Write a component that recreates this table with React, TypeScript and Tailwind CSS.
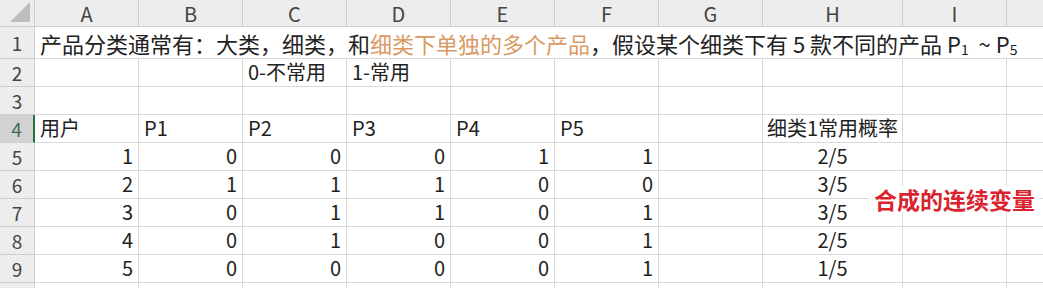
const cols = ['A', 'B', 'C', 'D', 'E', 'F', 'G', 'H', 'I', '']

const rows = [
  [1, 0, 0, 0, 1, 1, '2/5'],
  [2, 1, 1, 1, 0, 0, '3/5'],
  [3, 0, 1, 1, 0, 1, '3/5'],
  [4, 0, 1, 0, 0, 1, '2/5'],
  [5, 0, 0, 0, 0, 1, '1/5'],
]

const font = { fontFamily: '"Noto Sans CJK SC", "Liberation Sans", sans-serif' }

const Head = ({ children, active }: { children?: React.ReactNode; active?: boolean }) => (
  <div
    className={
      'flex items-center justify-center border-b border-r border-[#cfcfcf] text-[19px] leading-none ' +
      (active ? 'bg-[#d2d2d2] text-[#3f6b53] border-r-2 border-r-[#217346]' : 'bg-[#ededed] text-[#444]')
    }
  >
    {children}
  </div>
)

const Cell = ({ children, align = 'left' }: { children?: React.ReactNode; align?: string }) => (
  <div
    className={
      'flex items-end pb-[2px] px-[5px] border-b border-r border-[#d9d9d9] text-[20px] leading-[24px] text-[#222] whitespace-nowrap ' +
      (align === 'right' ? 'justify-end' : align === 'center' ? 'justify-center' : 'justify-start')
    }
  >
    {children}
  </div>
)

export default function App() {
  return (
    <div className="relative w-[1043px] h-[288px] overflow-hidden bg-white" style={font}>
      <div className="grid grid-cols-[35px_104px_104px_104px_104px_104px_104px_104px_140px_104px_40px] grid-rows-[27px_32px_28px_28px_28px_28px_28px_28px_28px_28px_28px]">
        {/* header row */}
        <div className="relative bg-[#ededed] border-b border-r border-[#cfcfcf]">
          <div className="absolute right-[4px] bottom-[4px] w-0 h-0 border-l-[20px] border-l-transparent border-b-[20px] border-b-[#bdbdbd]" />
        </div>
        {cols.map((c, i) => (
          <div
            key={i}
            className="flex items-center justify-center pt-[2px] bg-[#ededed] border-b border-r border-[#cfcfcf] text-[20px] leading-none text-[#444]"
          >
            {c}
          </div>
        ))}

        {/* row 1 */}
        <Head>1</Head>
        <div className="col-span-10 flex items-center px-[5px] border-b border-[#d9d9d9] text-[22px] leading-[28px] text-[#222] whitespace-nowrap">
          产品分类通常有：大类，细类，和
          <span className="text-[#d99a63]">细类下单独的多个产品</span>
          ，假设某个细类下有 5 款不同的产品 P
          <span className="text-[14px] relative top-[6px]">1</span>
          &nbsp;&nbsp;~ P<span className="text-[14px] relative top-[6px]">5</span>
        </div>

        {/* row 2 */}
        <Head>2</Head>
        <Cell />
        <Cell />
        <Cell>0-不常用</Cell>
        <Cell>1-常用</Cell>
        <Cell />
        <Cell />
        <Cell />
        <Cell />
        <Cell />
        <Cell />

        {/* row 3 */}
        <Head>3</Head>
        {Array.from({ length: 10 }).map((_, i) => (
          <Cell key={i} />
        ))}

        {/* row 4 */}
        <Head active>4</Head>
        <Cell>用户</Cell>
        <Cell>P1</Cell>
        <Cell>P2</Cell>
        <Cell>P3</Cell>
        <Cell>P4</Cell>
        <Cell>P5</Cell>
        <Cell />
        <Cell align="center">细类1常用概率</Cell>
        <Cell />
        <Cell />

        {rows.map((r, i) => (
          <div key={i} className="contents">
            <Head>{i + 5}</Head>
            {r.slice(0, 6).map((v, j) => (
              <Cell key={j} align="right">
                {v}
              </Cell>
            ))}
            <Cell />
            <Cell align="center">{r[6]}</Cell>
            <Cell />
            <Cell />
          </div>
        ))}

        {/* row 10, only its top edge is in view */}
        <Head />
        {Array.from({ length: 10 }).map((_, i) => (
          <Cell key={i} />
        ))}
      </div>

      <div className="absolute left-[869px] top-[186px] bg-white px-[5px] text-[23px] leading-[26px] font-bold text-[#d9232e]">
        合成的连续变量
      </div>
    </div>
  )
}
